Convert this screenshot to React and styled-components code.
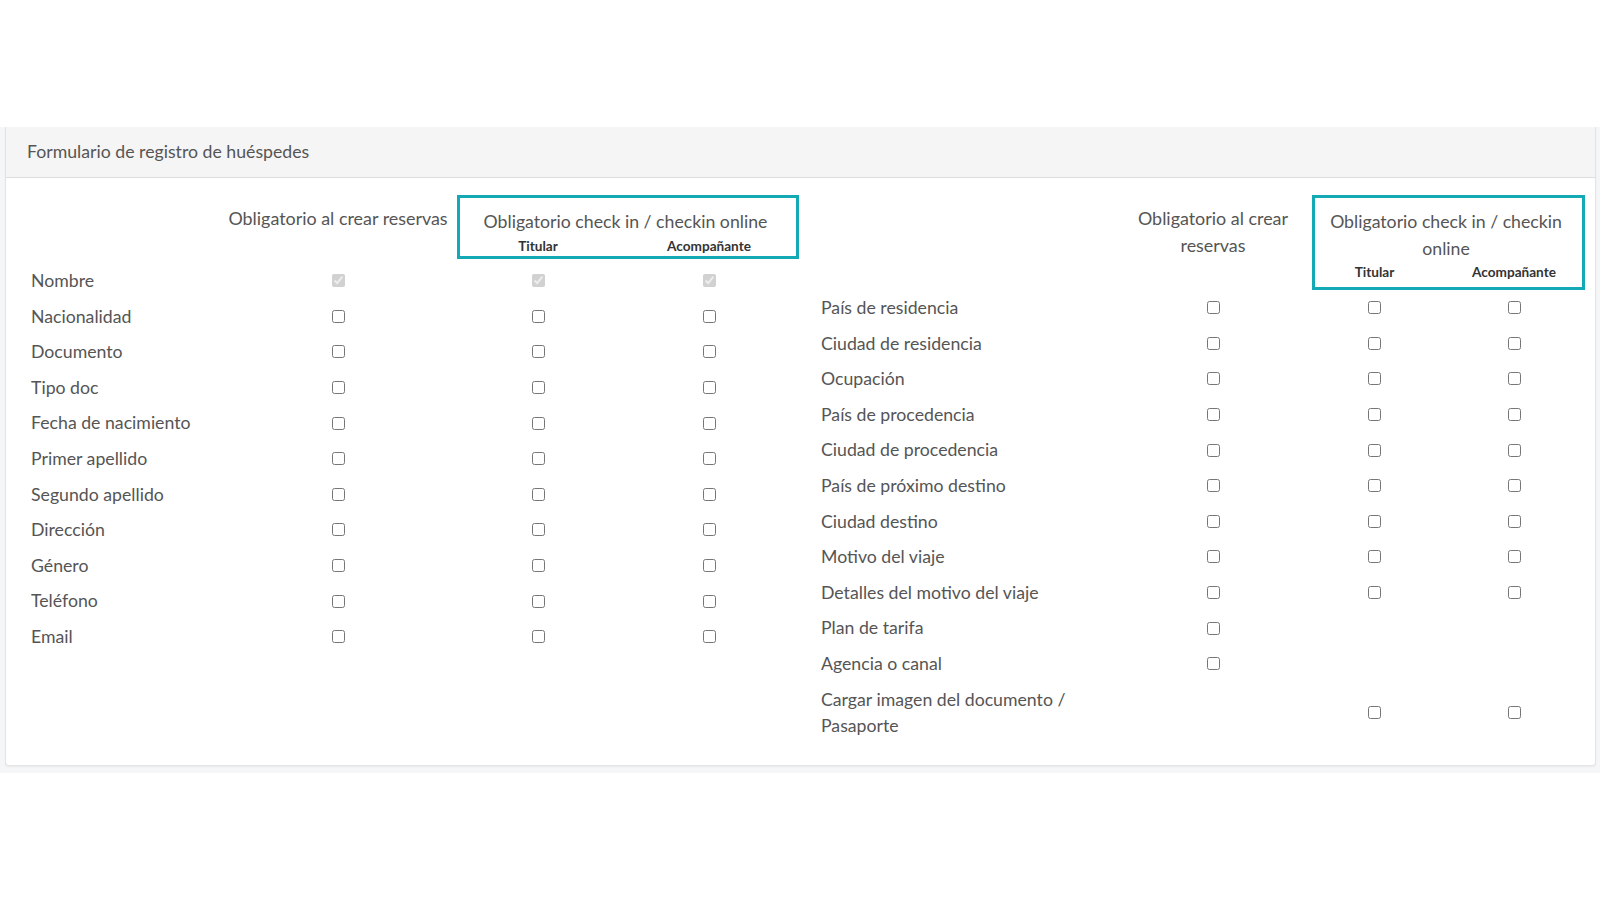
import React from 'react';
import styled, { createGlobalStyle } from 'styled-components';

const GlobalStyle = createGlobalStyle`
  body {
    margin: 0;
    background: #ffffff;
    font-family: Lato, 'Open Sans', sans-serif;
    color: #555555;
  }
`;

const Page = styled.div`
  padding-top: 127px;
  min-height: 773px;
`;

const Band = styled.div`
  background: #f5f6f8;
  padding: 0 4px 7px 5px;
`;

const Panel = styled.section`
  background: #ffffff;
  border: 1px solid #e4e4e4;
  border-top: none;
  border-radius: 0 0 4px 4px;
  box-shadow: 0 1px 2px rgba(0, 0, 0, 0.05);
`;

const PanelHeader = styled.header`
  background: #f5f5f5;
  border-bottom: 1px solid #dedede;
  padding: 12px 21px;
  font-size: 17.7px;
  line-height: 26px;
  color: #555555;
`;

const PanelBody = styled.div`
  display: flex;
  gap: 22px;
  padding: 17px 0 21px 25px;
`;

const Table = styled.div`
  display: flex;
  flex-direction: column;
`;

const Head = styled.div`
  display: grid;
  grid-template-columns: ${(p) => p.cols};
  grid-template-rows: auto auto;
  margin-bottom: ${(p) => p.gap}px;
`;

const ColHead = styled.div`
  grid-column: 2;
  grid-row: 1 / span 2;
  padding-top: 10px;
  text-align: center;
  font-size: 17.9px;
  line-height: 26.5px;
  white-space: ${(p) => (p.nowrap ? 'nowrap' : 'normal')};
`;

const Box = styled.div`
  grid-column: 4 / 6;
  grid-row: 1 / 3;
  border: 3px solid #13aab5;
  margin-right: ${(p) => p.inset}px;
`;

const BoxTitle = styled.div`
  grid-column: 4 / 6;
  grid-row: 1;
  padding: 14px ${(p) => p.inset + 8}px 0 3px;
  text-align: center;
  font-size: 17.7px;
  line-height: 26.5px;
`;

const SubLabel = styled.div`
  grid-row: 2;
  grid-column: ${(p) => p.col};
  text-align: center;
  font-size: 13.6px;
  font-weight: 700;
  line-height: 16px;
  color: #333333;
  padding: 2px 0 ${(p) => p.pb}px;
`;

const Row = styled.div`
  display: grid;
  grid-template-columns: ${(p) => p.cols};
  align-items: center;
`;

const Label = styled.div`
  grid-column: 1;
  font-size: 17.7px;
  line-height: 26.5px;
  padding: 5px 0 4.1px;
  color: #555555;
`;

const Cell = styled.div`
  grid-column: ${(p) => p.col};
  display: flex;
  justify-content: center;
  align-items: center;
`;

const Check = styled.input.attrs({ type: 'checkbox' })`
  margin: 0;
  width: 13px;
  height: 13px;
`;

const leftCols = '195px 224px 7px 162px 180px';
const rightCols = '312px 160px 19px 125px 154px';

const leftRows = [
  ['Nombre', [1, 1, 1], true],
  ['Nacionalidad', [1, 1, 1]],
  ['Documento', [1, 1, 1]],
  ['Tipo doc', [1, 1, 1]],
  ['Fecha de nacimiento', [1, 1, 1]],
  ['Primer apellido', [1, 1, 1]],
  ['Segundo apellido', [1, 1, 1]],
  ['Dirección', [1, 1, 1]],
  ['Género', [1, 1, 1]],
  ['Teléfono', [1, 1, 1]],
  ['Email', [1, 1, 1]],
];

const rightRows = [
  ['País de residencia', [1, 1, 1]],
  ['Ciudad de residencia', [1, 1, 1]],
  ['Ocupación', [1, 1, 1]],
  ['País de procedencia', [1, 1, 1]],
  ['Ciudad de procedencia', [1, 1, 1]],
  ['País de próximo destino', [1, 1, 1]],
  ['Ciudad destino', [1, 1, 1]],
  ['Motivo del viaje', [1, 1, 1]],
  ['Detalles del motivo del viaje', [1, 1, 1]],
  ['Plan de tarifa', [1, 0, 0]],
  ['Agencia o canal', [1, 0, 0]],
  ['Cargar imagen del documento / Pasaporte', [0, 1, 1]],
];

const checkCols = [2, 4, 5];

function FieldTable({ cols, rows, gap, inset, pb, nowrap }) {
  return (
    <Table>
      <Head cols={cols} gap={gap}>
        <ColHead nowrap={nowrap}>Obligatorio al crear reservas</ColHead>
        <Box inset={inset} />
        <BoxTitle inset={inset}>Obligatorio check in / checkin online</BoxTitle>
        <SubLabel col={4} pb={pb}>Titular</SubLabel>
        <SubLabel col={5} pb={pb}>Acompañante</SubLabel>
      </Head>
      {rows.map(([name, checks, locked]) => (
        <Row key={name} cols={cols}>
          <Label>{name}</Label>
          {checks.map((has, i) =>
            has ? (
              <Cell key={i} col={checkCols[i]}>
                {locked ? <Check checked disabled readOnly /> : <Check />}
              </Cell>
            ) : null
          )}
        </Row>
      ))}
    </Table>
  );
}

export default function App() {
  return (
    <Page>
      <GlobalStyle />
      <Band>
        <Panel>
          <PanelHeader>Formulario de registro de huéspedes</PanelHeader>
          <PanelBody>
            <FieldTable cols={leftCols} rows={leftRows} gap={4} inset={0} pb={5.5} nowrap />
            <FieldTable cols={rightCols} rows={rightRows} gap={0} inset={6} pb={10} />
          </PanelBody>
        </Panel>
      </Band>
    </Page>
  );
}
